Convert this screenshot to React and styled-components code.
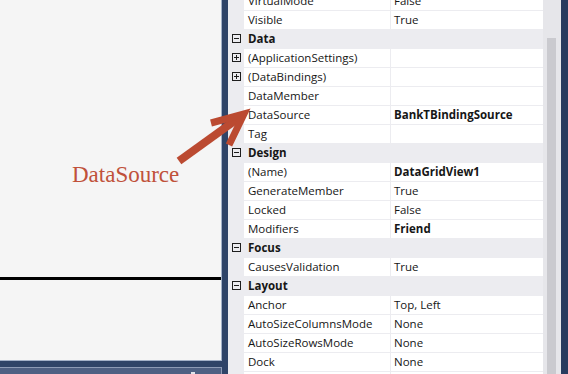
import React from "react"
import styled, { createGlobalStyle } from "styled-components"

const GlobalStyle = createGlobalStyle`
  html, body {
    margin: 0;
    padding: 0;
    background: #2f4468;
  }
`

const Root = styled.div`
  position: relative;
  display: flex;
  width: 568px;
  height: 374px;
  background: #2f4468;
  overflow: hidden;
  font-family: "Open Sans", "Noto Sans", sans-serif;
`

const LeftPane = styled.div`
  width: 222px;
  display: flex;
  flex-direction: column;
  margin-right: 6px;
`

const Canvas = styled.div`
  height: 361px;
  box-sizing: border-box;
  background: #f5f5f5;
  border-right: 1px solid #a3b1c8;
  border-bottom: 1px solid #a3b1c8;
  display: flex;
  flex-direction: column;
`

const Callout = styled.div`
  margin: 162px 0 0 72px;
  font-family: "Liberation Serif", "Times New Roman", serif;
  font-size: 23px;
  line-height: 26px;
  color: #c0513a;
`

const Rule = styled.div`
  margin-top: 89px;
  height: 3px;
  background: #000;
`

const StatusBar = styled.div`
  margin-top: 6px;
  flex: 1;
  display: flex;
  justify-content: flex-end;
  align-items: flex-end;
  padding-right: 26px;
  background: #4e6083;
  border-top: 1px solid #8d9bb6;
  border-right: 1px solid #8d9bb6;
`

const Grip = styled.div`
  width: 4px;
  height: 2px;
  background: #dfe3ea;
`

const PropertyPanel = styled.div`
  flex: 1;
  display: flex;
  min-width: 0;
`

const Grid = styled.div`
  flex: 1;
  overflow: hidden;
  background: #fff;
`

const List = styled.div`
  margin-top: -9px;
`

const Row = styled.div`
  display: grid;
  grid-template-columns: 16px 147px 1fr;
  height: 19px;
  font-size: 11.5px;
  color: #161616;
  background: ${({ $category }) => ($category ? "#ececf0" : "#fff")};
`

const Gutter = styled.div`
  background: #ececf0;
  display: flex;
  align-items: center;
  padding-left: 4px;
`

const NameCell = styled.div`
  box-sizing: border-box;
  padding-left: 4px;
  white-space: nowrap;
  overflow: hidden;
  border-top: ${({ $category }) => ($category ? "none" : "1px solid #ececf0")};
  border-right: ${({ $category }) => ($category ? "none" : "1px solid #ececf0")};
  line-height: ${({ $category }) => ($category ? "19px" : "18px")};
  font-weight: ${({ $category }) => ($category ? 700 : 400)};
`

const ValueCell = styled.div`
  box-sizing: border-box;
  padding-left: 3px;
  line-height: 18px;
  white-space: nowrap;
  overflow: hidden;
  border-top: ${({ $category }) => ($category ? "none" : "1px solid #ececf0")};
  font-weight: ${({ $bold }) => ($bold ? 700 : 400)};
`

const Scrollbar = styled.div`
  width: 18px;
  box-sizing: border-box;
  padding: 38px 5px 0 4px;
  background: #e6e6ea;
  display: flex;
`

const Thumb = styled.div`
  flex: 1;
  background: #cacacf;
`

const EdgeStrip = styled.div`
  width: 7px;
  background: #283b5f;
`

const Overlay = styled.svg`
  position: absolute;
  left: 0;
  top: 0;
  pointer-events: none;
`

const ExpandBox = ({ open }) => (
  <svg width="9" height="9" viewBox="0 0 9 9">
    <rect x="0.5" y="0.5" width="8" height="8" fill="none" stroke="#1e1e1e" />
    <line x1="2" y1="4.5" x2="7" y2="4.5" stroke="#1e1e1e" />
    {!open && <line x1="4.5" y1="2" x2="4.5" y2="7" stroke="#1e1e1e" />}
  </svg>
)

const rows = [
  { name: "VirtualMode", value: "False" },
  { name: "Visible", value: "True" },
  { category: "Data" },
  { name: "(ApplicationSettings)", value: "", expand: true },
  { name: "(DataBindings)", value: "", expand: true },
  { name: "DataMember", value: "" },
  { name: "DataSource", value: "BankTBindingSource", bold: true },
  { name: "Tag", value: "" },
  { category: "Design" },
  { name: "(Name)", value: "DataGridView1", bold: true },
  { name: "GenerateMember", value: "True" },
  { name: "Locked", value: "False" },
  { name: "Modifiers", value: "Friend", bold: true },
  { category: "Focus" },
  { name: "CausesValidation", value: "True" },
  { category: "Layout" },
  { name: "Anchor", value: "Top, Left" },
  { name: "AutoSizeColumnsMode", value: "None" },
  { name: "AutoSizeRowsMode", value: "None" },
  { name: "Dock", value: "None" },
  { name: "", value: "" },
]

const PropertyRow = ({ row }) => {
  if (row.category) {
    return (
      <Row $category>
        <Gutter>
          <ExpandBox open />
        </Gutter>
        <NameCell $category>{row.category}</NameCell>
        <ValueCell $category />
      </Row>
    )
  }
  return (
    <Row>
      <Gutter>{row.expand && <ExpandBox />}</Gutter>
      <NameCell>{row.name}</NameCell>
      <ValueCell $bold={row.bold}>{row.value}</ValueCell>
    </Row>
  )
}

export default function App() {
  return (
    <>
      <GlobalStyle />
      <Root>
        <LeftPane>
          <Canvas>
            <Callout>DataSource</Callout>
            <Rule />
          </Canvas>
          <StatusBar>
            <Grip />
          </StatusBar>
        </LeftPane>
        <PropertyPanel>
          <Grid>
            <List>
              {rows.map((row, i) => (
                <PropertyRow key={i} row={row} />
              ))}
            </List>
          </Grid>
          <Scrollbar>
            <Thumb />
          </Scrollbar>
        </PropertyPanel>
        <EdgeStrip />
        <Overlay width="568" height="374">
          <line x1="179" y1="161" x2="240" y2="117" stroke="#bb4a31" strokeWidth="8" />
          <polyline
            points="211,123 244,114 229,145"
            fill="none"
            stroke="#bb4a31"
            strokeWidth="7"
            strokeLinejoin="miter"
          />
        </Overlay>
      </Root>
    </>
  )
}
